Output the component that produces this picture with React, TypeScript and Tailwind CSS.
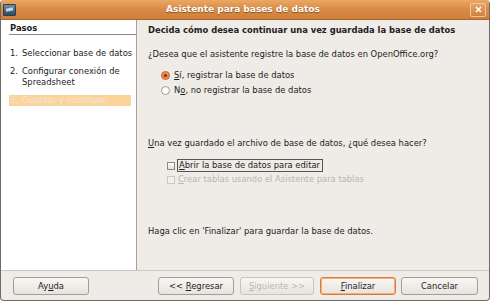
import React from "react";

// Step item in the left "Pasos" list
const Step = ({ n, label, active }: { n: number; label: React.ReactNode; active?: boolean }) => (
  <div
    className={`flex whitespace-nowrap pl-[1px] mr-[5px] ${
      active ? "bg-[#fbd49c] text-[#efe6d8]" : "text-[#222]"
    }`}
  >
    <span className="w-[12px] shrink-0">{n}.</span>
    <span>{label}</span>
  </div>
);

const Btn = ({
  children,
  w = "w-[76px]",
  disabled,
  primary,
}: {
  children: React.ReactNode;
  w?: string;
  disabled?: boolean;
  primary?: boolean;
}) => (
  <button
    className={`${w} h-[18px] rounded-[3px] border leading-none bg-gradient-to-b from-[#f8f6f4] to-[#e8e3dd] ${
      primary ? "border-[#e07a38] ring-1 ring-inset ring-[#f4b07a]" : "border-[#a39d96]"
    } ${disabled ? "text-[#bdb7b0] border-[#c8c3bd]" : "text-[#1e1e1e]"}`}
  >
    {children}
  </button>
);

export default function App() {
  return (
    <div
      className="w-[490px] h-[301px] bg-[#efebe7] flex flex-col border-x border-b border-[#6f6a64] rounded-[4px] overflow-hidden text-[8.4px] leading-[11px]"
      style={{ fontFamily: '"DejaVu Sans", sans-serif' }}
    >
      {/* Title bar */}
      <div className="h-[20px] shrink-0 flex items-center pl-[2px] pr-[3px] bg-gradient-to-b from-[#eba763] via-[#d98b45] to-[#cf7f3a] border-b border-[#a9652c]">
        <div className="w-[13px] h-[12px] rounded-[1px] bg-gradient-to-b from-[#6f8ea8] to-[#2e4a64] border border-[#2a3e52] flex items-center justify-center">
          <div className="w-[7px] h-[3px] bg-[#c8d6e2] -rotate-12" />
        </div>
        <div className="flex-1 text-center text-white font-bold text-[9px] [text-shadow:0_1px_1px_#8a4f1e]">
          Asistente para bases de datos
        </div>
        <div className="w-[16px] h-[14px] rounded-[2px] border border-[#f0c79c] bg-gradient-to-b from-[#e6a467] to-[#cf803d] flex items-center justify-center">
          <svg width="7" height="7" viewBox="0 0 7 7">
            <path d="M1 1L6 6M6 1L1 6" stroke="#fff" strokeWidth="1.6" />
          </svg>
        </div>
      </div>

      {/* Body */}
      <div className="flex flex-1 min-h-0">
        {/* Left steps panel */}
        <div className="w-[136px] shrink-0 bg-white border-r border-[#a7a19a] pt-[3px] pl-[8px]">
          <div className="font-bold text-[#222] border-b border-[#8d8883] pl-[1px] mb-[13px]">Pasos</div>
          <div className="flex flex-col gap-[7px]">
            <Step n={1} label="Seleccionar base de datos" />
            <Step
              n={2}
              label={
                <>
                  Configurar conexión de
                  <br />
                  Spreadsheet
                </>
              }
            />
            <Step n={3} label="Guardar y continuar" active />
          </div>
        </div>

        {/* Right content */}
        <div className="flex-1 pl-[11px] pt-[5px] text-[#222]">
          <div className="font-bold mb-[13px]">Decida cómo desea continuar una vez guardada la base de datos</div>
          <div>¿Desea que el asistente registre la base de datos en OpenOffice.org?</div>
          <div className="pl-[13px] mt-[10px] flex flex-col gap-[4px]">
            <label className="flex items-center gap-[4px]">
              <span className="w-[9px] h-[9px] rounded-full border border-[#c8683a] bg-[#f08a4d] flex items-center justify-center">
                <span className="w-[3px] h-[3px] rounded-full bg-[#7a2e10]" />
              </span>
              <span>
                <u>S</u>í, registrar la base de datos
              </span>
            </label>
            <label className="flex items-center gap-[4px]">
              <span className="w-[9px] h-[9px] rounded-full border border-[#9d978f] bg-white" />
              <span>
                N<u>o</u>, no registrar la base de datos
              </span>
            </label>
          </div>

          <div className="mt-[42px]">
            <u>U</u>na vez guardado el archivo de base de datos, ¿qué desea hacer?
          </div>
          <div className="pl-[19px] mt-[10px] flex flex-col gap-[2px]">
            <label className="flex items-center gap-[2px]">
              <span className="w-[8px] h-[8px] border border-[#8d8883] bg-gradient-to-b from-white to-[#e3dfda]" />
              <span className="border border-[#555] pl-[1px] pr-[2px] leading-[11px]">
                <u>A</u>brir la base de datos para editar
              </span>
            </label>
            <label className="flex items-center gap-[3px] text-[#bab5ae]">
              <span className="w-[8px] h-[8px] border border-[#cbc6c0] bg-[#f3f0ed]" />
              <span>
                <u>C</u>rear tablas usando el Asistente para tablas
              </span>
            </label>
          </div>

          <div className="mt-[41px]">Haga clic en 'Finalizar' para guardar la base de datos.</div>
        </div>
      </div>

      {/* Bottom buttons */}
      <div className="h-[30px] shrink-0 border-t border-[#cbc6c0] flex items-start pt-[6px] pl-[12px] pr-[11px]">
        <Btn>
          Ay<u>u</u>da
        </Btn>
        <div className="flex-1" />
        <div className="flex">
          <Btn>
            &lt;&lt; <u>R</u>egresar
          </Btn>
          <div className="w-[6px]" />
          <Btn w="w-[74px]" disabled>
            <u>S</u>iguiente &gt;&gt;
          </Btn>
          <div className="w-[6px]" />
          <Btn primary>
            <u>F</u>inalizar
          </Btn>
          <div className="w-[5px]" />
          <Btn w="w-[77px]">Cancelar</Btn>
        </div>
      </div>
    </div>
  );
}
